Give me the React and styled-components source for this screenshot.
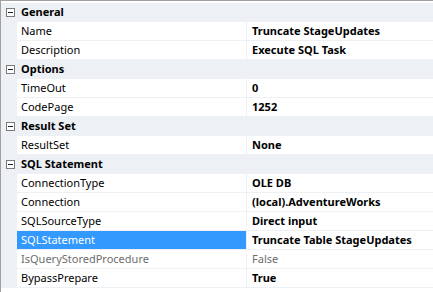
import styled, { createGlobalStyle } from "styled-components";

const GlobalStyle = createGlobalStyle`
  html, body {
    margin: 0;
    padding: 0;
    background: #ffffff;
  }
  body {
    font-family: "Noto Sans", "Open Sans", sans-serif;
    font-size: 11px;
  }
`;

const sections = [
  {
    title: "General",
    rows: [
      { name: "Name", value: "Truncate StageUpdates" },
      { name: "Description", value: "Execute SQL Task" },
    ],
  },
  {
    title: "Options",
    rows: [
      { name: "TimeOut", value: "0" },
      { name: "CodePage", value: "1252" },
    ],
  },
  {
    title: "Result Set",
    rows: [{ name: "ResultSet", value: "None" }],
  },
  {
    title: "SQL Statement",
    rows: [
      { name: "ConnectionType", value: "OLE DB" },
      { name: "Connection", value: "(local).AdventureWorks" },
      { name: "SQLSourceType", value: "Direct input" },
      { name: "SQLStatement", value: "Truncate Table StageUpdates", selected: true },
      { name: "IsQueryStoredProcedure", value: "False", disabled: true },
      { name: "BypassPrepare", value: "True" },
    ],
  },
];

const Grid = styled.div`
  width: 432px;
  height: 289px;
  border-top: 1px solid #a0a0a0;
  border-left: 1px solid #a0a0a0;
  padding-top: 2px;
  background: #ffffff;
  overflow: hidden;
`;

const Row = styled.div`
  display: flex;
  height: 18px;
  border-bottom: 1px solid #edf0f5;
  background: ${(p) => (p.$category ? "#edf0f5" : "#ffffff")};
`;

const Gutter = styled.div`
  width: 16px;
  flex: none;
  display: flex;
  align-items: center;
  justify-content: center;
  background: #edf0f5;
`;

const Toggle = styled.span`
  width: 7px;
  height: 7px;
  border: 1px solid #7a7a7a;
  background: #ffffff;
  display: flex;
  align-items: center;
  justify-content: center;
  margin-left: 2px;

  &::after {
    content: "";
    width: 5px;
    height: 1px;
    background: #202020;
  }
`;

const Title = styled.div`
  padding-left: 4px;
  font-weight: 700;
  color: #000000;
  line-height: 18px;
  white-space: nowrap;
`;

const NameCell = styled.div`
  width: 225px;
  flex: none;
  padding-left: 4px;
  line-height: 18px;
  white-space: nowrap;
  overflow: hidden;
  border-right: 1px solid #edf0f5;
  background: ${(p) => (p.$selected ? "#3399ff" : "transparent")};
  color: ${(p) => (p.$selected ? "#ffffff" : p.$disabled ? "#6d6d6d" : "#000000")};
`;

const ValueCell = styled.div`
  flex: 1;
  padding-left: 5px;
  line-height: 18px;
  white-space: nowrap;
  overflow: hidden;
  font-weight: ${(p) => (p.$disabled ? 400 : 700)};
  color: ${(p) => (p.$disabled ? "#6d6d6d" : "#000000")};
`;

const App = () => {
  return (
    <>
      <GlobalStyle />
      <Grid>
        {sections.map((section) => (
          <div key={section.title}>
            <Row $category>
              <Gutter>
                <Toggle />
              </Gutter>
              <Title>{section.title}</Title>
            </Row>
            {section.rows.map((row) => (
              <Row key={row.name}>
                <Gutter />
                <NameCell $selected={row.selected} $disabled={row.disabled}>
                  {row.name}
                </NameCell>
                <ValueCell $disabled={row.disabled}>{row.value}</ValueCell>
              </Row>
            ))}
          </div>
        ))}
      </Grid>
    </>
  );
};

export default App;
